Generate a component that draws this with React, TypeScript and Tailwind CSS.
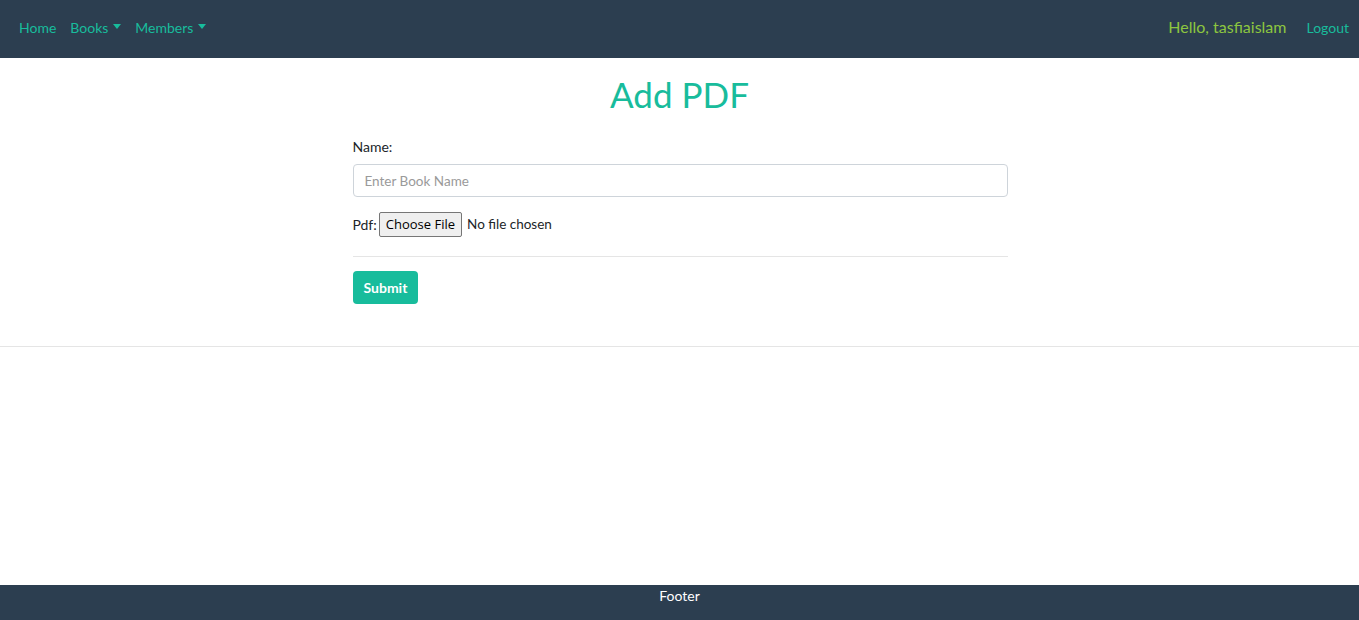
import React from "react";

function Caret() {
  return (
    <span className="inline-block ml-[5px] align-middle border-x-[4px] border-x-transparent border-t-[5px] border-t-[#18bc9c] mb-[2px]" />
  );
}

export default function App() {
  return (
    <div className="min-h-[620px] flex flex-col bg-white font-['Lato','Liberation_Sans',sans-serif] text-[14px] text-[#212529]">
      {/* Navbar */}
      <nav className="h-[58px] bg-[#2c3e50] flex items-center justify-between pl-[19px] pr-[10px] pb-[4px]">
        <div className="flex items-center gap-[14px] text-[#18bc9c] text-[14px]">
          <a href="#">Home</a>
          <a href="#" className="flex items-center">
            Books
            <Caret />
          </a>
          <a href="#" className="flex items-center">
            Members
            <Caret />
          </a>
        </div>
        <div className="flex items-center gap-[20px]">
          <span className="text-[#8cc63f] text-[16px]">Hello, tasfiaislam</span>
          <a href="#" className="text-[#18bc9c] text-[14px]">Logout</a>
        </div>
      </nav>

      {/* Content */}
      <main className="border-b border-[#e5e5e5] pb-[42px]">
        <h1 className="text-center text-[35px] leading-[42px] text-[#18bc9c] mt-[15px] mb-[21px]">Add PDF</h1>
        <form className="w-[656px] mx-auto pl-[1px]">
          <label className="block leading-[22px] mb-[6px]">Name:</label>
          <input
            type="text"
            placeholder="Enter Book Name"
            className="w-full h-[33px] border border-[#ced4da] rounded-[4px] px-[11px] text-[13.5px] placeholder:text-[#9a9a9a] outline-none"
          />
          <div className="flex items-center mt-[15px] h-[25px]">
            <span className="mr-[2px]">Pdf:</span>
            <input
              type="file"
              className="text-[13.5px] file:h-[25px] file:px-[6px] file:mr-[5px] file:border file:border-[#767676] file:bg-[#efefef] file:rounded-[2px] file:text-[13px] file:font-['Open_Sans',sans-serif] file:text-black"
            />
          </div>
          <hr className="mt-[19px] mb-[14px] border-t border-[#e5e5e5]" />
          <button
            type="button"
            className="h-[33px] px-[11px] bg-[#18bc9c] text-white font-bold text-[14px] rounded-[4px]"
          >
            Submit
          </button>
        </form>
      </main>

      <div className="flex-1" />

      {/* Footer */}
      <footer className="h-[35px] bg-[#2c3e50] text-white text-center text-[14px] leading-[22px]">Footer</footer>
    </div>
  );
}
